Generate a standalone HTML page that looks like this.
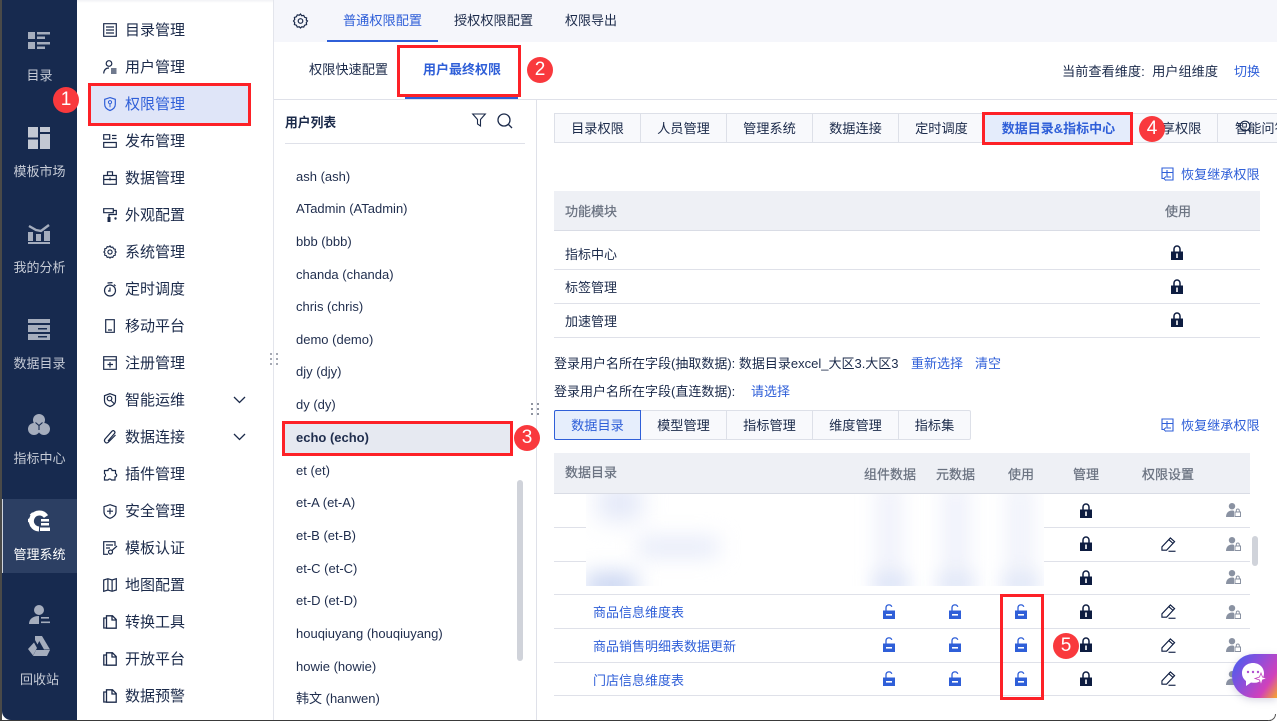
<!DOCTYPE html>
<html lang="zh"><head><meta charset="utf-8"><title>权限管理</title>
<style>
html,body{margin:0;padding:0;width:1277px;height:721px;overflow:hidden;background:#fff}
body{position:relative;font-family:"Liberation Sans","Noto Sans CJK SC",sans-serif;color:#1b2a4a;font-size:13px}
.a{position:absolute}
.t{position:absolute;white-space:nowrap;line-height:20px;height:20px;margin-top:2px}
.s{color:#c6cbd6;font-size:13px;width:75px;left:2px;text-align:center}
.m{left:125px;font-size:15px;color:#1b2a4a;margin-top:1px}
.u{left:296px;font-size:13px;color:#1f2d4d}
.b{color:#2f5fd8}
.g{color:#6a7280;-webkit-text-stroke:.25px #6a7280}
.tab{position:absolute;height:28px;line-height:29px;text-align:center;background:#f8f9fc;border:1px solid #dde0e8;border-left:0;font-size:13.2px;color:#1b2a4a;box-sizing:content-box;overflow:hidden;white-space:nowrap}
.line{position:absolute;height:1px;background:#dfe1e9}
.red{position:absolute;border:3px solid #fd2127;box-sizing:border-box}
.badge{position:absolute;width:26px;height:26px;border-radius:50%;background:#f9393d;color:#fff;font-size:19px;line-height:26px;text-align:center}
svg.i{position:absolute;overflow:visible}
</style></head><body>
<svg width="0" height="0" style="position:absolute">
<defs>
<symbol id="lock" viewBox="0 0 12 15"><path d="M3 7V4a3 3 0 0 1 6 0v3" fill="none" stroke="#0d1c40" stroke-width="1.5"/><rect x="0" y="6.5" width="12" height="8.5" fill="#0d1c40"/><rect x="5.2" y="8.5" width="1.6" height="4.5" fill="#fff"/></symbol>
<symbol id="unlock" viewBox="0 0 12 15"><path d="M3 7V3.800a3 3 0 0 1 5.800-1" fill="none" stroke="#2f5fd8" stroke-width="1.300"/><rect x="0" y="6.500" width="12" height="8.500" fill="#2f5fd8"/><rect x="3" y="10" width="6" height="1.600" fill="#fff"/></symbol>
<symbol id="edit" viewBox="0 0 16 16"><path d="M1 14V10.500L10 1l4.500 4-8.500 9zM8.500 3l4.300 3.800" fill="none" stroke="#0d1c40" stroke-width="1.200"/><path d="M8 15.200h7.500" stroke="#0d1c40" stroke-width="1.200"/></symbol>
<symbol id="plock" viewBox="0 0 15 14"><circle cx="6" cy="3.200" r="3.200" fill="#8a92a2"/><path d="M0 14c0-4 2.500-6.500 6-6.500 1 0 1.600.2 2 .4V14z" fill="#8a92a2"/><rect x="9" y="9" width="5.500" height="4.500" fill="#fff" stroke="#8a92a2"/><path d="M10.300 9V7.500a1.500 1.500 0 0 1 3 0V9" fill="none" stroke="#8a92a2"/></symbol>
<symbol id="doc" viewBox="0 0 14 14"><path d="M3.500 3V.8h6L13.200 4.500v8.700H3.500zM9 1v4h4M3.500 3H.8v10h2.700" fill="none" stroke="#1b2a4a" stroke-width="1.300"/></symbol>
<symbol id="rest" viewBox="0 0 13 14"><path d="M3 11.500H1V1h11v12H5M1 5.500h11M6 5.500V10h4M6 3v2.500" fill="none" stroke="#2f5fd8" stroke-width="1.100"/><path d="M5 9.500L2.800 11.500 5 13.500" fill="none" stroke="#2f5fd8"/></symbol>
</defs></svg>

<!-- Left nav -->
<div class="a" style="left:0;top:0;width:2px;height:721px;background:#4a4a48"></div>
<div class="a" style="left:2px;top:0;width:75px;height:720px;background:#172a4f;border-bottom-left-radius:9px"></div>
<div class="a" style="left:2px;top:499px;width:75px;height:74px;background:#2c3f63;border-left:1px solid #cfd4de;box-sizing:border-box"></div>

<svg class="i" style="left:28px;top:32px" width="22" height="18" viewBox="0 0 22 18"><g fill="#a5adbd"><rect width="7" height="7"/><rect y="10" width="7" height="7"/><rect x="9" y="0" width="13" height="2.500"/><rect x="9" y="4.500" width="8" height="2.500"/><rect x="9" y="10" width="13" height="2.500"/><rect x="9" y="14.500" width="8" height="2.500"/></g></svg>
<div class="t s" style="top:64px">目录</div>
<svg class="i" style="left:28px;top:127px" width="22" height="22" viewBox="0 0 22 22"><g fill="#c3c8d3"><rect width="10" height="10.500"/><rect y="12.500" width="10" height="9.500"/><rect x="12" width="10" height="5"/><rect x="12" y="7" width="10" height="15"/></g></svg>
<div class="t s" style="top:160px">模板市场</div>
<svg class="i" style="left:28px;top:223px" width="22" height="21" viewBox="0 0 22 21"><g fill="#a5adbd"><rect y="9" width="5" height="9"/><rect x="8" y="11" width="5" height="7"/><rect x="16" y="8" width="6" height="10"/><rect y="19" width="22" height="2"/></g><path d="M1 3l7 4 5 1 8-6" fill="none" stroke="#a5adbd" stroke-width="2.400"/></svg>
<div class="t s" style="top:256px">我的分析</div>
<svg class="i" style="left:28px;top:319px" width="22" height="21" viewBox="0 0 22 21"><g fill="#a5adbd"><rect width="22" height="4"/><rect y="6" width="22" height="7"/><rect y="15" width="22" height="6"/></g><rect x="10" y="9" width="9" height="1.500" fill="#172a4f"/><rect x="10" y="17" width="9" height="1.500" fill="#172a4f"/></svg>
<div class="t s" style="top:352px">数据目录</div>
<svg class="i" style="left:28px;top:414px" width="22" height="22" viewBox="0 0 22 22"><g fill="#a5adbd"><circle cx="11" cy="6" r="6"/><circle cx="6" cy="15" r="6"/><circle cx="16" cy="15" r="6"/></g><path d="M7.500 8.500L11 11.500l3.500-3M11 11.500V16" stroke="#172a4f" stroke-width="1.100" fill="none"/></svg>
<div class="t s" style="top:447px">指标中心</div>
<svg class="i" style="left:28px;top:510px" width="22" height="22" viewBox="0 0 22 22"><path d="M18 6.500A8 8 0 1 0 11 19" fill="none" stroke="#fff" stroke-width="5"/><path d="M10.500 1v3M3 3.500l2 2M0 10.500h3M3 17l2-2M17 3.500l-2 2" stroke="#fff" stroke-width="3.500"/><rect x="13" y="9" width="8" height="2.500" fill="#fff"/><rect x="13" y="13" width="8" height="2.500" fill="#fff"/><rect x="12" y="17.500" width="10" height="3.500" fill="#fff"/></svg>
<div class="t s" style="top:543px;color:#fff">管理系统</div>
<svg class="i" style="left:29px;top:605px" width="21" height="19" viewBox="0 0 21 19"><g fill="#a5adbd"><circle cx="10" cy="5" r="5"/><path d="M0 19c0-5 4-8 10-8v8z"/><rect x="12" y="12" width="8" height="1.600"/><rect x="12" y="16.500" width="9" height="1.600"/></g></svg>
<svg class="i" style="left:28px;top:636px" width="22" height="20" viewBox="0 0 22 20"><g fill="#a5adbd"><path d="M7 0h7l-3 5.500-1.500 3L7 4z"/><path d="M14 0l8 13.500h-6L9 1z"/><path d="M6 6.500l3 5.500-4 7.500-5-6.500z"/><path d="M8 14h14l-3 6H5z"/></g></svg>
<div class="t s" style="top:668px">回收站</div>

<div class="a" style="left:273px;top:0;width:1px;height:720px;background:#e3e5ec"></div>
<div class="a" style="left:77px;top:0;width:196px;height:3px;background:linear-gradient(#f1f2f6,#fff)"></div>

<!-- Secondary menu -->
<div class="a" style="left:88px;top:83px;width:163px;height:43px;background:#dfe5f8"></div>
<div class="red" style="left:88px;top:83px;width:163px;height:43px"></div>

<svg class="i" style="left:103px;top:23px" width="14" height="14" viewBox="0 0 14 14"><path d="M.7.7h12.600v12.600H.7zM3 4h8M3 7h8M3 10h8" fill="none" stroke="#1b2a4a" stroke-width="1.200"/></svg>
<div class="t m" style="top:20px">目录管理</div>
<svg class="i" style="left:103px;top:60px" width="14" height="14" viewBox="0 0 14 14"><circle cx="6" cy="3.500" r="2.800" fill="none" stroke="#1b2a4a" stroke-width="1.200"/><path d="M.7 13.500C1 9.500 3 8 6 8M8 9h5.500M8 11h5.500M8 13h5.500" fill="none" stroke="#1b2a4a" stroke-width="1.200"/></svg>
<div class="t m" style="top:57px">用户管理</div>
<svg class="i" style="left:104px;top:97px" width="12" height="14" viewBox="0 0 12 14"><path d="M6 .6l5.300 1.700v5.200c0 3-2.500 5-5.300 6-2.800-1-5.300-3-5.300-6V2.300z" fill="none" stroke="#2f5fd8" stroke-width="1.200"/><circle cx="6" cy="5.200" r="1.600" fill="none" stroke="#2f5fd8"/><path d="M6 6.800v3.500" stroke="#2f5fd8"/></svg>
<div class="t m b" style="top:94px">权限管理</div>
<svg class="i" style="left:103px;top:134px" width="14" height="14" viewBox="0 0 14 14"><path d="M.7.7h6v4.500h-6zM.7 8.500h12.600v4.800H.7zM9 1.500h4.500M9 4.500h4.500" fill="none" stroke="#1b2a4a" stroke-width="1.200"/></svg>
<div class="t m" style="top:131px">发布管理</div>
<svg class="i" style="left:103px;top:171px" width="14" height="14" viewBox="0 0 14 14"><path d="M.7 4.500h12.600v8.800H.7zM4.500 4.500V.8h5v3.700M.7 8.500h12.600M7 6.500v3" fill="none" stroke="#1b2a4a" stroke-width="1.200"/></svg>
<div class="t m" style="top:168px">数据管理</div>
<svg class="i" style="left:103px;top:208px" width="14" height="14" viewBox="0 0 14 14"><path d="M.7.7h9.600v4H.7zM10.300 2.500h3v4H6v2.500" fill="none" stroke="#1b2a4a" stroke-width="1.200"/><rect x="4.500" y="9" width="3" height="5" fill="#1b2a4a"/><circle cx="12.500" cy="10.500" r="1.200" fill="#1b2a4a"/></svg>
<div class="t m" style="top:205px">外观配置</div>
<svg class="i" style="left:103px;top:245px" width="14" height="14" viewBox="0 0 15 16"><path d="M7.500 1l1.200 1.700 2-.3.900 1.900 2 .6-.3 2.100L14.500 8l-1.200 1.500.3 2.100-2 .6-.9 1.900-2-.3L7.500 15l-1.200-1.200-2 .3-.9-1.900-2-.6.3-2.100L.5 8l1.200-1.500-.3-2.100 2-.6.9-1.900 2 .3z" fill="none" stroke="#1b2a4a" stroke-width="1.300"/><circle cx="7.500" cy="8" r="2.400" fill="none" stroke="#1b2a4a" stroke-width="1.300"/></svg>
<div class="t m" style="top:242px">系统管理</div>
<svg class="i" style="left:103px;top:282px" width="14" height="15" viewBox="0 0 14 15"><circle cx="7" cy="8.500" r="5.500" fill="none" stroke="#1b2a4a" stroke-width="1.200"/><path d="M7 5.500V9h-2M4.500 1l5-.4M11 2.500l1.500 1.500" fill="none" stroke="#1b2a4a" stroke-width="1.200"/></svg>
<div class="t m" style="top:279px">定时调度</div>
<svg class="i" style="left:105px;top:319px" width="10" height="14" viewBox="0 0 10 14"><path d="M.7.7h8.600v12.600H.7zM3 11h4" fill="none" stroke="#1b2a4a" stroke-width="1.200"/></svg>
<div class="t m" style="top:316px">移动平台</div>
<svg class="i" style="left:103px;top:356px" width="14" height="14" viewBox="0 0 14 14"><path d="M.7.7h12.600v12.600H.7zM.7 4h12.600M7 6v5.500M4.500 8.500H10" fill="none" stroke="#1b2a4a" stroke-width="1.200"/></svg>
<div class="t m" style="top:353px">注册管理</div>
<svg class="i" style="left:103px;top:393px" width="14" height="14" viewBox="0 0 14 14"><path d="M7 .7l5.500 2v5c0 3-2.500 4.800-5.500 5.800-3-1-5.500-2.800-5.500-5.800v-5z" fill="none" stroke="#1b2a4a" stroke-width="1.200"/><circle cx="6.500" cy="5.500" r="2.300" fill="none" stroke="#1b2a4a" stroke-width="1.200"/><path d="M8 7.500l3.500 3.500" stroke="#1b2a4a" stroke-width="1.200"/></svg>
<div class="t m" style="top:390px">智能运维</div>
<svg class="i" style="left:233px;top:396px" width="13" height="8" viewBox="0 0 13 8"><path d="M1 1l5.500 5.500L12 1" fill="none" stroke="#1b2a4a" stroke-width="1.300"/></svg>
<svg class="i" style="left:103px;top:430px" width="14" height="14" viewBox="0 0 14 14"><path d="M5 11l6.500-7.500a1.700 1.700 0 0 0-2.500-2.300L2 9c-1.500 2 .5 5 3 3.500L12.500 5" fill="none" stroke="#1b2a4a" stroke-width="1.200"/></svg>
<div class="t m" style="top:427px">数据连接</div>
<svg class="i" style="left:233px;top:433px" width="13" height="8" viewBox="0 0 13 8"><path d="M1 1l5.500 5.500L12 1" fill="none" stroke="#1b2a4a" stroke-width="1.300"/></svg>
<svg class="i" style="left:103px;top:467px" width="14" height="14" viewBox="0 0 14 14"><path d="M5 3.500a2 2 0 0 1 4 0h3.500v3a2 2 0 0 1 1 2.500c-.3.700-1 1-1.500 1v3h-3.500a2 2 0 0 0-3.500 0H1.500v-3a2 2 0 0 0 0-3.500V3.500z" fill="none" stroke="#1b2a4a" stroke-width="1.200"/></svg>
<div class="t m" style="top:464px">插件管理</div>
<svg class="i" style="left:103px;top:504px" width="14" height="15" viewBox="0 0 14 15"><path d="M7 .7l6 2v5.300c0 3-3 5.300-6 6.300-3-1-6-3.300-6-6.300V2.700z" fill="none" stroke="#1b2a4a" stroke-width="1.200"/><path d="M4 7.200h6M7 4.200v6" stroke="#1b2a4a" stroke-width="1.200"/></svg>
<div class="t m" style="top:501px">安全管理</div>
<svg class="i" style="left:103px;top:541px" width="15" height="14" viewBox="0 0 15 14"><path d="M12 5V.7H.7v12.600H5M3 4h7M3 7h4" fill="none" stroke="#1b2a4a" stroke-width="1.200"/><circle cx="7.500" cy="11" r="2" fill="none" stroke="#1b2a4a" stroke-width="1.200"/><path d="M9 9.500L14 5" stroke="#1b2a4a" stroke-width="1.200"/></svg>
<div class="t m" style="top:538px">模板认证</div>
<svg class="i" style="left:103px;top:578px" width="14" height="14" viewBox="0 0 14 14"><path d="M.7 2l4.200-1.300 4.200 1.300 4.200-1.300v11.300l-4.200 1.300-4.200-1.300-4.200 1.300zM4.900 1v11M9.100 2v11" fill="none" stroke="#1b2a4a" stroke-width="1.200"/></svg>
<div class="t m" style="top:575px">地图配置</div>
<svg class="i" style="left:103px;top:615px" width="14" height="14"><use href="#doc"/></svg>
<div class="t m" style="top:612px">转换工具</div>
<svg class="i" style="left:103px;top:652px" width="14" height="14"><use href="#doc"/></svg>
<div class="t m" style="top:649px">开放平台</div>
<svg class="i" style="left:103px;top:689px" width="14" height="14"><use href="#doc"/></svg>
<div class="t m" style="top:686px">数据预警</div>

<!-- Top bar -->
<div class="a" style="left:274px;top:0;width:1003px;height:42px;background:#f5f6fb"></div>
<svg class="i" style="left:293px;top:13px" width="15" height="16" viewBox="0 0 15 16"><path d="M7.500 1l1.200 1.700 2-.3.900 1.900 2 .6-.3 2.100L14.500 8l-1.200 1.500.3 2.100-2 .6-.9 1.900-2-.3L7.500 15l-1.200-1.200-2 .3-.9-1.900-2-.6.3-2.100L.5 8l1.200-1.500-.3-2.100 2-.6.9-1.900 2 .3z" fill="none" stroke="#1b2a4a" stroke-width="1.200"/><circle cx="7.500" cy="8" r="2.300" fill="none" stroke="#1b2a4a" stroke-width="1.200"/></svg>
<div class="t b" style="left:343px;top:9px;font-size:13.2px">普通权限配置</div>
<div class="a" style="left:327px;top:40px;width:111px;height:2px;background:#2f5fd8"></div>
<div class="t" style="left:454px;top:9px;font-size:13.2px">授权权限配置</div>
<div class="t" style="left:565px;top:9px;font-size:13px">权限导出</div>

<div class="t" style="left:309px;top:58px;font-size:13.2px">权限快速配置</div>
<div class="t b" style="left:423px;top:58px;font-size:13px;font-weight:700">用户最终权限</div>
<div class="a" style="left:405px;top:97px;width:113px;height:2px;background:#2f5fd8"></div>
<div class="red" style="left:397px;top:45px;width:124px;height:52px"></div>
<div class="badge" style="left:527px;top:57px">2</div>
<div class="line" style="left:274px;top:99px;width:1003px"></div>
<div class="t" style="left:1062px;top:60px;font-size:13.2px">当前查看维度:&nbsp; 用户组维度</div>
<div class="t b" style="left:1234px;top:60px;font-size:13px">切换</div>

<!-- User list -->
<div class="a" style="left:536px;top:100px;width:1px;height:620px;background:#dfe1e9"></div>
<div class="t" style="left:285px;top:111px;font-size:12.8px;font-weight:700">用户列表</div>
<svg class="i" style="left:472px;top:113px" width="14" height="14" viewBox="0 0 14 14"><path d="M.7 1h12.600L8.500 6.500V13l-3-2V6.500z" fill="none" stroke="#1b2a4a" stroke-width="1.100"/></svg>
<svg class="i" style="left:497px;top:113px" width="16" height="16" viewBox="0 0 16 16"><circle cx="7" cy="7" r="6" fill="none" stroke="#1b2a4a" stroke-width="1.300"/><path d="M11.500 11.500L15 15" stroke="#1b2a4a" stroke-width="1.300"/></svg>
<div class="line" style="left:285px;top:143px;width:240px"></div>
<div class="t u" style="top:165px">ash (ash)</div>
<div class="t u" style="top:197px">ATadmin (ATadmin)</div>
<div class="t u" style="top:230px">bbb (bbb)</div>
<div class="t u" style="top:263px">chanda (chanda)</div>
<div class="t u" style="top:295px">chris (chris)</div>
<div class="t u" style="top:328px">demo (demo)</div>
<div class="t u" style="top:360px">djy (djy)</div>
<div class="t u" style="top:393px">dy (dy)</div>
<div class="a" style="left:282px;top:421px;width:231px;height:35px;background:#e6e9f1"></div>
<div class="t u" style="top:426px;font-weight:700">echo (echo)</div>
<div class="red" style="left:282px;top:421px;width:231px;height:35px"></div>
<div class="badge" style="left:514px;top:425px">3</div>
<div class="t u" style="top:459px">et (et)</div>
<div class="t u" style="top:491px">et-A (et-A)</div>
<div class="t u" style="top:524px">et-B (et-B)</div>
<div class="t u" style="top:557px">et-C (et-C)</div>
<div class="t u" style="top:589px">et-D (et-D)</div>
<div class="t u" style="top:622px">houqiuyang (houqiuyang)</div>
<div class="t u" style="top:655px">howie (howie)</div>
<div class="t u" style="top:687px">韩文 (hanwen)</div>
<div class="a" style="left:517px;top:480px;width:6px;height:181px;background:#d0d3da;border-radius:3px"></div>
<svg class="i" style="left:270px;top:353px" width="9" height="14"><g fill="#a5a9b3"><rect x="0" y="0" width="2" height="2"/><rect x="6" y="0" width="2" height="2"/><rect x="0" y="5" width="2" height="2"/><rect x="6" y="5" width="2" height="2"/><rect x="0" y="10" width="2" height="2"/><rect x="6" y="10" width="2" height="2"/></g></svg>
<svg class="i" style="left:531px;top:403px" width="9" height="14"><g fill="#8f94a0"><rect x="0" y="0" width="2" height="2"/><rect x="6" y="0" width="2" height="2"/><rect x="0" y="5" width="2" height="2"/><rect x="6" y="5" width="2" height="2"/><rect x="0" y="10" width="2" height="2"/><rect x="6" y="10" width="2" height="2"/></g></svg>

<!-- Right tabs -->
<div class="a" style="left:554px;top:113px;width:723px;height:30px;overflow:hidden">
<div class="tab" style="left:0;top:0;border-left:1px solid #dde0e8;width:85px">目录权限</div>
<div class="tab" style="left:87px;top:0;width:85px">人员管理</div>
<div class="tab" style="left:173px;top:0;width:85px">管理系统</div>
<div class="tab" style="left:259px;top:0;width:85px">数据连接</div>
<div class="tab" style="left:345px;top:0;width:85px">定时调度</div>
<div class="tab" style="left:431px;top:0;width:147px;background:#e4ecfb;color:#2f5fd8;font-weight:700;font-size:13px">数据目录&amp;指标中心</div>
<div class="tab" style="left:579px;top:0;width:84px">分享权限</div>
<div class="tab" style="left:664px;top:0;width:85px;text-align:left;text-indent:17px">智能问答</div>
</div>
<svg class="i" style="left:1238px;top:120px" width="14" height="14" viewBox="0 0 14 14"><circle cx="7" cy="6" r="4.800" fill="none" stroke="#1b2a4a" stroke-width="1.200"/><path d="M10.500 10l2 2.500" stroke="#1b2a4a" stroke-width="1.200"/></svg>
<div class="red" style="left:982px;top:112px;width:151px;height:33px"></div>
<div class="badge" style="left:1139px;top:116px">4</div>

<svg class="i" style="left:1161px;top:167px" width="13" height="14"><use href="#rest"/></svg>
<div class="t b" style="left:1181px;top:163px;font-size:13.1px">恢复继承权限</div>

<!-- Table 1 -->
<div class="a" style="left:554px;top:191px;width:706px;height:39px;background:#eef0f5;border-bottom:1px solid #d9dce5"></div>
<div class="t g" style="left:565px;top:200px;font-size:13px">功能模块</div>
<div class="t g" style="left:1165px;top:200px;font-size:13px">使用</div>
<div class="t" style="left:565px;top:243px;font-size:13px">指标中心</div>
<div class="line" style="left:554px;top:269px;width:706px"></div>
<div class="t" style="left:565px;top:276px;font-size:13px">标签管理</div>
<div class="line" style="left:554px;top:303px;width:706px"></div>
<div class="t" style="left:565px;top:310px;font-size:13px">加速管理</div>
<div class="line" style="left:554px;top:337px;width:706px"></div>
<svg class="i" style="left:1171px;top:245px" width="12" height="15"><use href="#lock"/></svg>
<svg class="i" style="left:1171px;top:279px" width="12" height="15"><use href="#lock"/></svg>
<svg class="i" style="left:1171px;top:312px" width="12" height="15"><use href="#lock"/></svg>

<!-- Field lines -->
<div class="t" style="left:554px;top:352px;font-size:13px">登录用户名所在字段(抽取数据): 数据目录excel_大区3.大区3</div>
<div class="t b" style="left:911px;top:352px;font-size:13px">重新选择</div>
<div class="t b" style="left:975px;top:352px;font-size:13px">清空</div>
<div class="t" style="left:554px;top:380px;font-size:13px">登录用户名所在字段(直连数据):</div>
<div class="t b" style="left:751px;top:380px;font-size:13px">请选择</div>

<!-- Tabs 2 -->
<div class="tab" style="left:641px;top:410px;width:85px">模型管理</div>
<div class="tab" style="left:727px;top:410px;width:85px">指标管理</div>
<div class="tab" style="left:813px;top:410px;width:85px">维度管理</div>
<div class="tab" style="left:899px;top:410px;width:71px;border-radius:0 2px 2px 0">指标集</div>
<div class="tab" style="left:554px;top:410px;width:85px;background:#e6eefc;color:#2f5fd8;border:1px solid #2f5fd8;border-radius:2px 0 0 2px">数据目录</div>
<svg class="i" style="left:1161px;top:418px" width="13" height="14"><use href="#rest"/></svg>
<div class="t b" style="left:1181px;top:414px;font-size:13.1px">恢复继承权限</div>

<!-- Table 2 -->
<div class="a" style="left:554px;top:453px;width:696px;height:40px;background:#eef0f5;border-bottom:1px solid #d9dce5"></div>
<div class="t g" style="left:565px;top:461px;font-size:13px">数据目录</div>
<div class="t g" style="left:864px;top:463px;font-size:13px">组件数据</div>
<div class="t g" style="left:936px;top:463px;font-size:13px">元数据</div>
<div class="t g" style="left:1008px;top:463px;font-size:13px">使用</div>
<div class="t g" style="left:1073px;top:463px;font-size:13px">管理</div>
<div class="t g" style="left:1142px;top:463px;font-size:13px">权限设置</div>
<div class="line" style="left:554px;top:527px;width:696px"></div>
<div class="line" style="left:554px;top:561px;width:696px"></div>
<div class="line" style="left:554px;top:594px;width:696px"></div>
<div class="line" style="left:554px;top:628px;width:696px"></div>
<div class="line" style="left:554px;top:662px;width:696px"></div>
<div class="line" style="left:554px;top:695px;width:696px"></div>

<!-- Blurred area -->
<div class="a" style="left:586px;top:494px;width:458px;height:92px;background:#fff;overflow:hidden">
<div class="a" style="left:12px;top:-8px;width:44px;height:34px;background:#e3e8f8;filter:blur(12px)"></div>
<div class="a" style="left:52px;top:44px;width:80px;height:18px;background:#e3e8f8;filter:blur(11px)"></div>
<div class="a" style="left:0;top:80px;width:50px;height:22px;background:#c3d0f0;filter:blur(11px)"></div>
<div class="a" style="left:290px;top:-10px;width:26px;height:115px;background:#f0f2fb;filter:blur(10px)"></div>
<div class="a" style="left:356px;top:-10px;width:28px;height:115px;background:#f0f2fb;filter:blur(10px)"></div>
<div class="a" style="left:420px;top:-10px;width:28px;height:115px;background:#f1f3fb;filter:blur(10px)"></div>
<div class="a" style="left:288px;top:80px;width:34px;height:18px;background:#dbe3f7;filter:blur(9px)"></div>
<div class="a" style="left:353px;top:80px;width:34px;height:18px;background:#dfe6f7;filter:blur(9px)"></div>
<div class="a" style="left:418px;top:80px;width:34px;height:18px;background:#dfe6f7;filter:blur(9px)"></div>
</div>

<!-- Locks column -->
<svg class="i" style="left:1080px;top:503px" width="12" height="15"><use href="#lock"/></svg>
<svg class="i" style="left:1080px;top:536px" width="12" height="15"><use href="#lock"/></svg>
<svg class="i" style="left:1080px;top:570px" width="12" height="15"><use href="#lock"/></svg>
<svg class="i" style="left:1080px;top:604px" width="12" height="15"><use href="#lock"/></svg>
<svg class="i" style="left:1080px;top:637px" width="12" height="15"><use href="#lock"/></svg>
<svg class="i" style="left:1080px;top:671px" width="12" height="15"><use href="#lock"/></svg>

<svg class="i" style="left:1161px;top:537px" width="15" height="15"><use href="#edit"/></svg>
<svg class="i" style="left:1161px;top:604px" width="15" height="15"><use href="#edit"/></svg>
<svg class="i" style="left:1161px;top:638px" width="15" height="15"><use href="#edit"/></svg>
<svg class="i" style="left:1161px;top:671px" width="15" height="15"><use href="#edit"/></svg>

<svg class="i" style="left:1226px;top:503px" width="15" height="14"><use href="#plock"/></svg>
<svg class="i" style="left:1226px;top:537px" width="15" height="14"><use href="#plock"/></svg>
<svg class="i" style="left:1226px;top:570px" width="15" height="14"><use href="#plock"/></svg>
<svg class="i" style="left:1226px;top:605px" width="15" height="14"><use href="#plock"/></svg>
<svg class="i" style="left:1226px;top:638px" width="15" height="14"><use href="#plock"/></svg>
<svg class="i" style="left:1226px;top:671px" width="15" height="14"><use href="#plock"/></svg>

<svg class="i" style="left:883px;top:604px" width="12" height="15"><use href="#unlock"/></svg>
<svg class="i" style="left:949px;top:604px" width="12" height="15"><use href="#unlock"/></svg>
<svg class="i" style="left:1015px;top:604px" width="12" height="15"><use href="#unlock"/></svg>
<svg class="i" style="left:883px;top:637px" width="12" height="15"><use href="#unlock"/></svg>
<svg class="i" style="left:949px;top:637px" width="12" height="15"><use href="#unlock"/></svg>
<svg class="i" style="left:1015px;top:637px" width="12" height="15"><use href="#unlock"/></svg>
<svg class="i" style="left:883px;top:671px" width="12" height="15"><use href="#unlock"/></svg>
<svg class="i" style="left:949px;top:671px" width="12" height="15"><use href="#unlock"/></svg>
<svg class="i" style="left:1015px;top:671px" width="12" height="15"><use href="#unlock"/></svg>

<div class="t b" style="left:593px;top:601px;font-size:13px">商品信息维度表</div>
<div class="t b" style="left:593px;top:635px;font-size:13px">商品销售明细表数据更新</div>
<div class="t b" style="left:593px;top:669px;font-size:13px">门店信息维度表</div>

<div class="a" style="left:1252px;top:536px;width:6px;height:30px;background:#d0d3da;border-radius:3px"></div>
<div class="red" style="left:1000px;top:594px;width:44px;height:106px"></div>
<div class="badge" style="left:1053px;top:633px">5</div>

<!-- Chat bubble -->
<div class="a" style="left:1232px;top:654px;width:45px;height:44px;border-radius:22px 0 0 22px;background:linear-gradient(125deg,#3f5fef 0%,#8a4fdc 40%,#d141bb 75%,#f8a72a 100%);box-shadow:0 2px 8px rgba(120,120,160,.3)"></div>
<svg class="i" style="left:1242px;top:663px" width="26" height="25" viewBox="0 0 26 25"><path d="M11 0C4.500 0 0 4.500 0 10c0 3.500 1.500 6 4 8v5l5-3.500c1 .3 3 .3 4 .3 5 0 9-4 9-9.500C22 4.500 17.500 0 11 0z" fill="#fff"/><circle cx="6" cy="9" r="1.200" fill="#b04fd0"/><circle cx="11" cy="9" r="1.200" fill="#b04fd0"/><circle cx="16" cy="9" r="1.200" fill="#b04fd0"/><path d="M19 10l1.500 4 4.500 1.500-4.500 1.500-1.500 5-1.500-5-4.500-1.500 4.500-1.500z" fill="#fff" stroke="#c446c0" stroke-width=".8"/></svg>

<div class="badge" style="left:53px;top:87px">1</div>

<!-- Window bottom edge -->
<div class="a" style="left:0;top:720px;width:1271px;height:1px;background:#3a3a3a"></div>
<div class="a" style="left:1268px;top:714px;width:8px;height:7px;border-right:1px solid #555;border-bottom:1px solid #555;border-bottom-right-radius:7px;box-sizing:border-box"></div>
</body></html>
